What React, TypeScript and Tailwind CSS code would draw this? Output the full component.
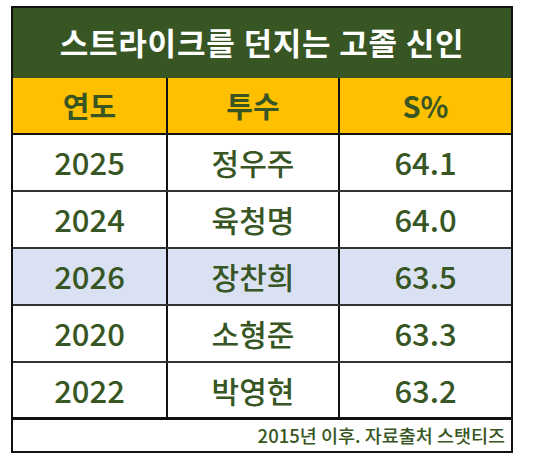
import React from "react";

const rows = [
  { y: "2025", n: "정우주", s: "64.1", hl: false },
  { y: "2024", n: "육청명", s: "64.0", hl: false },
  { y: "2026", n: "장찬희", s: "63.5", hl: true },
  { y: "2020", n: "소형준", s: "63.3", hl: false },
  { y: "2022", n: "박영현", s: "63.2", hl: false },
];

const font = { fontFamily: '"Noto Sans CJK KR", "Noto Sans", sans-serif' };

export default function App() {
  return (
    <div className="w-[547px] h-[458px] bg-white pt-[6px] pl-[11px]" style={font}>
      <div className="w-[502px] border-2 border-[#111] bg-white">
        <div className="h-[70px] bg-[#375623] flex items-center justify-center text-white font-bold text-[31px] tracking-[0.8px] pb-[2px]">
          스트라이크를 던지는 고졸 신인
        </div>
        <div className="grid grid-cols-[155px_172px_1fr] h-[57px] bg-[#FFC000] border-b-2 border-[#111] text-[#375623] font-bold text-[29px]">
          <div className="flex items-center justify-center border-r-2 border-[#111]">연도</div>
          <div className="flex items-center justify-center border-r-2 border-[#111]">투수</div>
          <div className="flex items-center justify-center">S%</div>
        </div>
        {rows.map((r, i) => (
          <div
            key={r.y}
            className={
              "grid grid-cols-[155px_172px_1fr] h-[57px] text-[#375623] text-[31px] font-medium " +
              (i === rows.length - 1 ? "border-b-[3px] border-[#111] " : "border-b-2 border-[#333] ") +
              (r.hl ? "bg-[#D9E1F2]" : "bg-white")
            }
          >
            <div className="flex items-center justify-center border-r-2 border-[#111]">{r.y}</div>
            <div className="flex items-center justify-center border-r-2 border-[#111] text-[30px]">{r.n}</div>
            <div className="flex items-center justify-center">{r.s}</div>
          </div>
        ))}
        <div className="h-[31px] flex items-center justify-end pr-[6px] text-[#375623] text-[18.5px] font-medium">
          2015년 이후. 자료출처 스탯티즈
        </div>
      </div>
    </div>
  );
}
